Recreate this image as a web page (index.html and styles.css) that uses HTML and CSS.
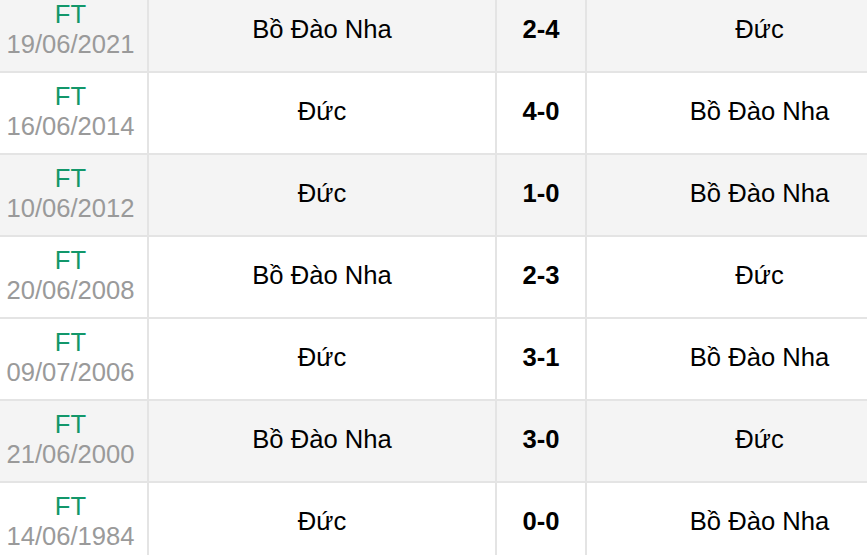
FILE: index.html
```html
<!DOCTYPE html>
<html lang="vi">
<head>
<meta charset="utf-8">
<link rel="stylesheet" href="styles.css">
</head>
<body>
<div class="frame">
<div class="table">
  <div class="row gray">
    <div class="cell time"><span class="ft">FT</span><span class="date">19/06/2021</span></div>
    <div class="cell team">Bồ Đào Nha</div>
    <div class="cell score">2-4</div>
    <div class="cell team last">Đức</div>
  </div>
  <div class="row">
    <div class="cell time"><span class="ft">FT</span><span class="date">16/06/2014</span></div>
    <div class="cell team">Đức</div>
    <div class="cell score">4-0</div>
    <div class="cell team last">Bồ Đào Nha</div>
  </div>
  <div class="row gray">
    <div class="cell time"><span class="ft">FT</span><span class="date">10/06/2012</span></div>
    <div class="cell team">Đức</div>
    <div class="cell score">1-0</div>
    <div class="cell team last">Bồ Đào Nha</div>
  </div>
  <div class="row">
    <div class="cell time"><span class="ft">FT</span><span class="date">20/06/2008</span></div>
    <div class="cell team">Bồ Đào Nha</div>
    <div class="cell score">2-3</div>
    <div class="cell team last">Đức</div>
  </div>
  <div class="row">
    <div class="cell time"><span class="ft">FT</span><span class="date">09/07/2006</span></div>
    <div class="cell team">Đức</div>
    <div class="cell score">3-1</div>
    <div class="cell team last">Bồ Đào Nha</div>
  </div>
  <div class="row gray">
    <div class="cell time"><span class="ft">FT</span><span class="date">21/06/2000</span></div>
    <div class="cell team">Bồ Đào Nha</div>
    <div class="cell score">3-0</div>
    <div class="cell team last">Đức</div>
  </div>
  <div class="row">
    <div class="cell time"><span class="ft">FT</span><span class="date">14/06/1984</span></div>
    <div class="cell team">Đức</div>
    <div class="cell score">0-0</div>
    <div class="cell team last">Bồ Đào Nha</div>
  </div>
</div>
</div>
</body>
</html>
```

FILE: styles.css
```css
html, body {
  margin: 0;
  padding: 0;
  background: #ffffff;
  overflow: hidden;
}
body {
  font-family: "Liberation Sans", Arial, sans-serif;
  font-size: 25.6px;
  color: #000;
}
.frame {
  width: 867px;
  height: 555px;
  overflow: hidden;
}
.table {
  width: 940px;
  margin-top: -9px;
  margin-left: -6px;
}
.row {
  display: grid;
  grid-template-columns: 155px 348px 90px 347px;
  height: 82px;
  box-sizing: border-box;
  border-bottom: 2px solid #e4e4e4;
  background: #ffffff;
}
.row.gray {
  background: #f4f4f4;
}
.cell {
  box-sizing: border-box;
  border-right: 2px solid #e4e4e4;
  display: flex;
  align-items: center;
  justify-content: center;
  line-height: 30px;
  padding-bottom: 4px;
}
.time {
  flex-direction: column;
}
.ft {
  color: #12976a;
}
.date {
  color: #9a9a9a;
}
.score {
  font-weight: bold;
}
```
